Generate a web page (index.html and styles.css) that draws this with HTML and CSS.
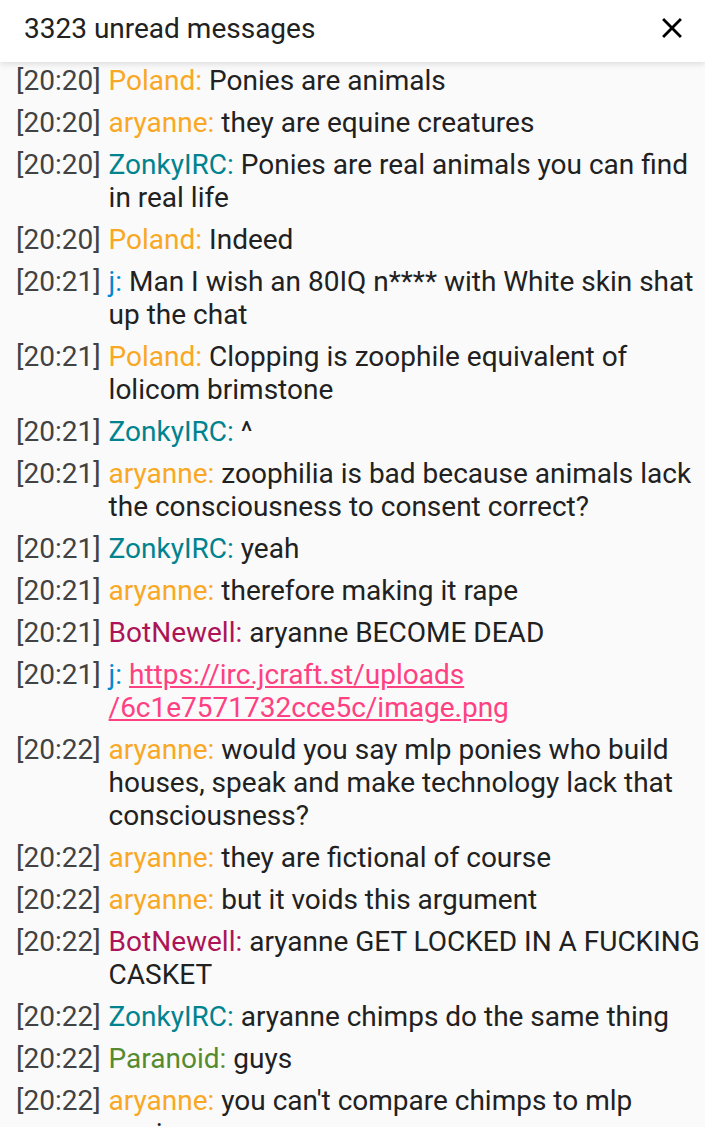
FILE: index.html
```html
<!DOCTYPE html>
<html lang="en">
  <head>
    <meta charset="UTF-8" />
    <meta name="viewport" content="width=device-width, initial-scale=1.0" />
    <title>Unread messages</title>
    <link rel="stylesheet" href="styles.css">
  </head>
  <body>
    <!-- header -->
    <header class="top-bar">
      <div class="title">3323 unread messages</div>
      <button class="close-btn" aria-label="close">
        <svg viewBox="0 0 24 24">
          <path d="M19 6.41L17.59 5 12 10.59 6.41 5 5 6.41 10.59 12 5 17.59 6.41 19 12 13.41 17.59 19 19 17.59 13.41 12z" fill="#000"/>
        </svg>
      </button>
    </header>

    <!-- message list -->
    <ul class="msg-list">
      <li class="msg"><span class="time">[20:20]</span><div class="body"><span class="nick orange">Poland:</span> Ponies are animals</div></li>
      <li class="msg"><span class="time">[20:20]</span><div class="body"><span class="nick orange">aryanne:</span> they are equine creatures</div></li>
      <li class="msg"><span class="time">[20:20]</span><div class="body"><span class="nick teal">ZonkyIRC:</span> Ponies are real animals you can find in real life</div></li>
      <li class="msg"><span class="time">[20:20]</span><div class="body"><span class="nick orange">Poland:</span> Indeed</div></li>
      <li class="msg"><span class="time">[20:21]</span><div class="body"><span class="nick blue">j:</span> Man I wish an 80IQ n**** with White skin shat up the chat</div></li>
      <li class="msg"><span class="time">[20:21]</span><div class="body"><span class="nick orange">Poland:</span> Clopping is zoophile equivalent of lolicom brimstone</div></li>
      <li class="msg"><span class="time">[20:21]</span><div class="body"><span class="nick teal">ZonkyIRC:</span> ^</div></li>
      <li class="msg"><span class="time">[20:21]</span><div class="body"><span class="nick orange">aryanne:</span> zoophilia is bad because animals lack the consciousness to consent correct?</div></li>
      <li class="msg"><span class="time">[20:21]</span><div class="body"><span class="nick teal">ZonkyIRC:</span> yeah</div></li>
      <li class="msg"><span class="time">[20:21]</span><div class="body"><span class="nick orange">aryanne:</span> therefore making it rape</div></li>
      <li class="msg"><span class="time">[20:21]</span><div class="body"><span class="nick crimson">BotNewell:</span> aryanne BECOME DEAD</div></li>
      <li class="msg"><span class="time">[20:21]</span><div class="body"><span class="nick blue">j:</span> <a class="link" href="#">https://irc.jcraft.st/uploads<br>/6c1e7571732cce5c/image.png</a></div></li>
      <li class="msg"><span class="time">[20:22]</span><div class="body"><span class="nick orange">aryanne:</span> would you say mlp ponies who build houses, speak and make technology lack that consciousness?</div></li>
      <li class="msg"><span class="time">[20:22]</span><div class="body"><span class="nick orange">aryanne:</span> they are fictional of course</div></li>
      <li class="msg"><span class="time">[20:22]</span><div class="body"><span class="nick orange">aryanne:</span> but it voids this argument</div></li>
      <li class="msg"><span class="time">[20:22]</span><div class="body"><span class="nick crimson">BotNewell:</span> aryanne GET LOCKED IN A FUCKING CASKET</div></li>
      <li class="msg"><span class="time">[20:22]</span><div class="body"><span class="nick teal">ZonkyIRC:</span> aryanne chimps do the same thing</div></li>
      <li class="msg"><span class="time">[20:22]</span><div class="body"><span class="nick green">Paranoid:</span> guys</div></li>
      <li class="msg"><span class="time">[20:22]</span><div class="body"><span class="nick orange">aryanne:</span> you can't compare chimps to mlp ponies</div></li>
    </ul>
  </body>
</html>
```

FILE: styles.css
```css
html,
body {
  margin: 0;
  height: 100%;
}
body {
  background-color: #fafafa;
  font-family: Roboto, "Noto Sans", sans-serif;
  color: #212121;
  overflow: hidden;
}

/* header */
.top-bar {
  height: 62px;
  box-sizing: border-box;
  background-color: #fff;
  display: flex;
  align-items: center;
  justify-content: space-between;
  padding: 0 16px 6px 24px;
  box-shadow: 0 2px 6px rgba(0, 0, 0, 0.12);
  position: relative;
  z-index: 1;
}
.title {
  font-size: 28px;
  line-height: 33px;
  color: #212121;
}
.close-btn {
  border: none;
  background: none;
  padding: 0;
  width: 34px;
  height: 34px;
  display: flex;
  align-items: center;
  justify-content: center;
}
.close-btn svg {
  width: 34px;
  height: 34px;
}

/* messages */
.msg-list {
  list-style: none;
  margin: 0;
  padding: 2px 0 0 16px;
}
.msg {
  display: flex;
  font-size: 28px;
  line-height: 33px;
  margin-bottom: 9px;
}
.time {
  color: #424242;
  flex: none;
  margin-right: 8px;
}
.body {
  flex: 1;
  min-width: 0;
}
.nick.orange {
  color: #f9a825;
}
.nick.teal {
  color: #00838f;
}
.nick.blue {
  color: #0288d1;
}
.nick.crimson {
  color: #ad1457;
}
.nick.green {
  color: #558b2f;
}
.link {
  color: #ff4081;
  text-decoration: underline;
}
```
